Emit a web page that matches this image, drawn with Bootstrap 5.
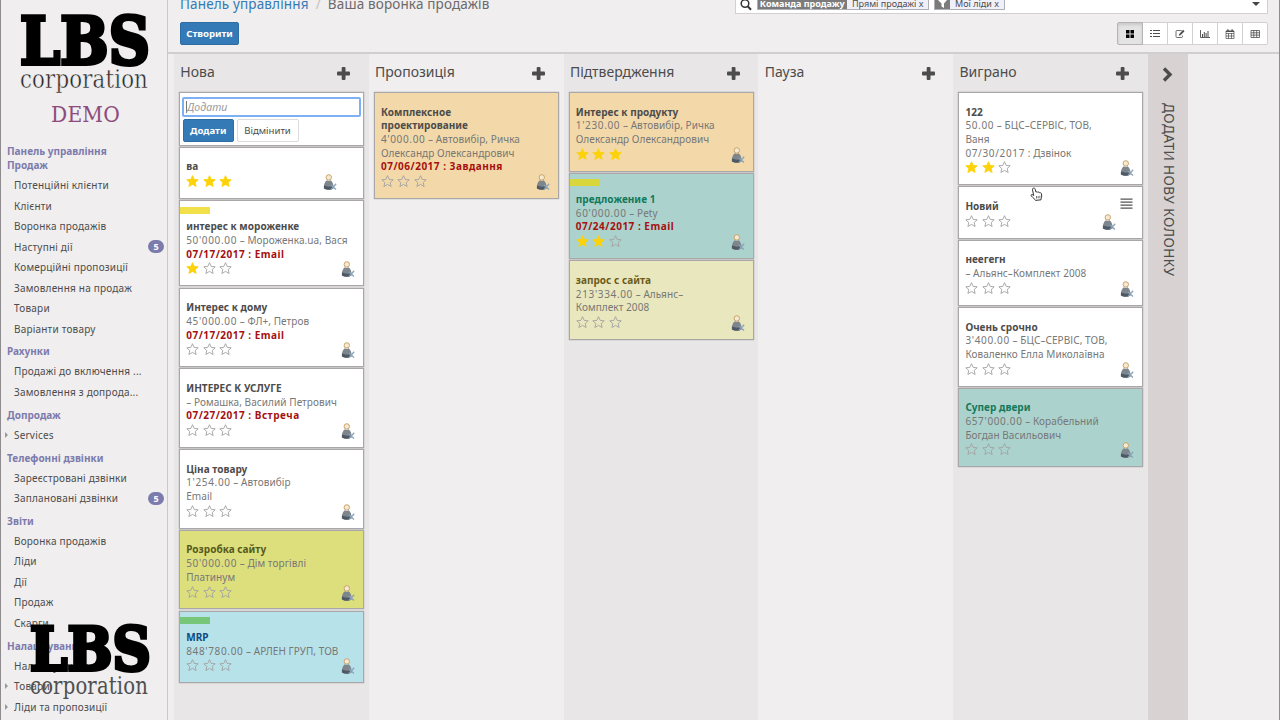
<!DOCTYPE html>
<html lang="uk">
<head>
  <meta charset="UTF-8">
  <meta name="viewport" content="width=device-width, initial-scale=1.0">
  <title>Ваша воронка продажів</title>
  <!-- Bootstrap CSS -->
  <link href="https://cdn.jsdelivr.net/npm/bootstrap@5.3.0/dist/css/bootstrap.min.css" rel="stylesheet">
  <!-- Custom CSS -->
  <style>
    body {
      font-family: "Noto Sans", "Open Sans", sans-serif;
      font-size: 10px;
      line-height: 13.7px;
      letter-spacing: 0.2px;
      color: #4c4c4c;
      background: #f0eeee;
      width: 1280px;
      height: 720px;
      overflow: hidden;
    }
    .app {
      height: 720px;
      border-left: 1px solid #8d8b8d;
      border-right: 1px solid #8d8b8d;
    }
    /* Sidebar */
    .sidebar {
      width: 167px;
      border-right: 1px solid #c9c7d0;
      overflow: hidden;
    }
    .brand-area {
      height: 145px;
    }
    .menu-title {
      color: #7c7bad;
      font-weight: 700;
      letter-spacing: 0;
      line-height: 19px;
      padding: 3.3px 0 0 6px;
      height: 22.3px;
    }
    .menu-title.tight {
      line-height: 13.7px;
      padding-top: 0;
      height: 13.7px;
    }
    .menu-title.tight-last {
      height: 16.5px;
    }
    .menu-item {
      height: 20.5px;
      line-height: 20.5px;
      padding: 0 3px 0 13px;
      white-space: nowrap;
    }
    .menu-item.has-sub {
      padding-left: 4px;
    }
    .menu-item.has-sub::before {
      content: "";
      border-left: 3px solid #999;
      border-top: 3px solid transparent;
      border-bottom: 3px solid transparent;
      margin-right: 6px;
    }
    .counter {
      background: #7c7bad;
      color: #fff;
      font-size: 9px;
      font-weight: 700;
      line-height: 13px;
      width: 16px;
      border-radius: 7px;
      text-align: center;
      letter-spacing: 0;
    }
    .watermark {
      position: absolute;
      left: 28px;
      top: 620px;
    }
    /* Control panel */
    .control-panel {
      height: 54px;
      border-bottom: 2px solid #d0cecf;
      padding: 0 11.5px 0 12px;
    }
    .crumbs {
      font-size: 13.5px;
      line-height: 18px;
      height: 27px;
      margin-top: -5px;
      letter-spacing: 0.15px;
      color: #6c6a6a;
      white-space: nowrap;
    }
    .crumbs a {
      color: #337ab7;
    }
    .crumb-slash {
      color: #c4c2c2;
      padding: 0 7px;
    }
    .search-box {
      width: 533px;
      height: 15px;
      margin: -1px 0 8px;
      background: #fff;
      border: 1px solid #d2d0d0;
      padding: 0 7px 0 4px;
    }
    .facet {
      height: 11px;
      margin-top: -1px;
      margin-right: 4.5px;
      line-height: 7px;
      border: 1px solid #afafb6;
      background: #f0f0fa;
      white-space: nowrap;
    }
    .facet-name {
      background: #7c7b7b;
      color: #fff;
      font-weight: 700;
      letter-spacing: 0;
    }
    .facet-name.named {
      width: 89.5px;
      text-align: center;
      font-size: 9px;
    }
    .facet-value {
      padding: 0 5px;
      letter-spacing: 0;
      font-size: 9px;
    }
    .btn-odoo {
      font-size: 9.6px;
      line-height: 20px;
      padding: 0;
      border-radius: 2px;
      height: 23px;
      letter-spacing: 0;
    }
    .btn-main {
      background: #337ab7;
      border-color: #2e6da4;
      color: #fff;
      font-weight: 700;
    }
    .btn-plain {
      background: #fff;
      border-color: #dcdcdc;
      color: #4c4c4c;
    }
    .btn-create {
      width: 59px;
    }
    .view-switch .btn {
      width: 26px;
      flex: none;
      border-color: #d2d2d2;
      background: #fff;
      color: #4c4c4c;
      display: flex;
      align-items: center;
      justify-content: center;
    }
    .view-switch .btn.active {
      background: #e4e4e4;
      border-color: #b5b5b5;
      box-shadow: inset 0 2px 3px rgba(0, 0, 0, 0.12);
      color: #000;
    }
    /* Kanban board */
    .board {
      padding-left: 6px;
    }
    .stage {
      width: 194.8px;
      padding: 0 5px;
    }
    .stage:nth-child(odd) {
      background: #e8e6e7;
    }
    .stage-head {
      height: 38px;
      padding: 0 13.5px 2px 1.3px;
      font-size: 14px;
      letter-spacing: 0;
    }
    .stage-head svg {
      margin-top: 2px;
    }
    .lead-card {
      width: 185px;
      border: 1px solid #a9a7a8;
      box-shadow: 0 0 1px rgba(0, 0, 0, 0.4);
      background: #fff;
      padding: 12.6px 8px 7.9px 6.2px;
      margin-bottom: 1.2px;
      color: #777;
      letter-spacing: 0.07px;
      white-space: nowrap;
    }
    .lead-card.tagged {
      padding-top: 5.6px;
    }
    .tag-bar {
      width: 30px;
      height: 7px;
      margin: 0 0 6.7px -6.2px;
    }
    .lead-name {
      font-weight: 700;
      letter-spacing: 0.03px;
      color: #4c4c4c;
    }
    .lead-late {
      font-weight: 700;
      letter-spacing: 0.5px;
      color: #a51010;
    }
    .amount {
      letter-spacing: 0.65px;
    }
    .lead-foot {
      height: 16px;
    }
    .stars {
      gap: 3.4px;
      padding-top: 1px;
    }
    .stars svg,
    .avatar {
      flex: none;
    }
    .lead-burger {
      height: 13.7px;
      margin-top: -2px;
      margin-right: 1px;
    }
    .has-menu .lead-foot {
      margin-right: 18px;
    }
    .quick-card {
      height: 53.5px;
      padding: 4px 2px 0;
    }
    .quick-input {
      height: 20px;
      border: 2px solid #7db1f3;
      border-radius: 2px;
      padding: 0 2px;
      font-style: italic;
      font-size: 10.5px;
      color: #999;
      line-height: 16px;
    }
    .quick-input::before {
      content: "";
      display: inline-block;
      height: 12px;
      border-left: 1px solid #777;
      vertical-align: -2px;
    }
    .quick-buttons {
      gap: 3px;
      padding: 2px 0 0 1px;
    }
    .quick-buttons .btn-main {
      width: 50.5px;
    }
    .quick-buttons .btn-plain {
      width: 62px;
    }
    .c-orange { background: #f3d9a9; }
    .c-teal { background: #acd2cd; }
    .c-teal .lead-name { color: #12795a; }
    .c-sand { background: #e9e7bd; }
    .c-sand .lead-name { color: #6b5c1b; }
    .c-lime { background: #dddf7d; }
    .c-lime .lead-name { color: #56591c; }
    .c-blue { background: #b8e2e9; }
    .c-blue .lead-name { color: #0c4a80; }
    .add-stage {
      width: 40px;
      background: #d8d2d2;
    }
    .add-stage-label {
      writing-mode: vertical-rl;
      font-size: 13.6px;
      line-height: 16px;
      letter-spacing: 0.42px;
      margin-top: 11px;
      margin-left: 2px;
      white-space: nowrap;
    }
    .pointer {
      position: absolute;
      left: 1030px;
      top: 187px;
    }
  </style>
</head>
<body>
  <div class="app d-flex">
    <!-- Sidebar -->
    <aside class="sidebar flex-shrink-0">
      <div class="brand-area">
        <svg width="166" height="145">
          <g font-family="DejaVu Serif">
            <text x="19" y="64" font-size="66" font-weight="700" fill="#000" stroke="#000" stroke-width="4" textLength="130" lengthAdjust="spacingAndGlyphs">LBS</text>
            <text x="19" y="88" font-size="26" fill="#222" stroke="#f0eeee" stroke-width=".5" textLength="128" lengthAdjust="spacingAndGlyphs">corporation</text>
            <text x="50" y="122" font-size="21.500" fill="#8e4c7c" textLength="69" lengthAdjust="spacingAndGlyphs">DEMO</text>
          </g>
        </svg>
      </div>
      <div id="menu"></div>
    </aside>

    <main class="flex-grow-1 d-flex flex-column">
      <!-- Control panel -->
      <div class="control-panel d-flex justify-content-between flex-shrink-0">
        <div>
          <div class="crumbs d-flex"><a href="#" class="text-decoration-none">Панель управління</a><span class="crumb-slash">/</span><span>Ваша воронка продажів</span></div>
          <button class="btn btn-odoo btn-main btn-create">Створити</button>
        </div>
        <div class="d-flex flex-column align-items-end">
          <div class="search-box d-flex align-items-start">
            <svg width="17" height="13" class="flex-shrink-0" fill="none" stroke="#333" stroke-width="1.500"><circle cx="5" cy="3.500" r="3.800"/><path d="M7.800 6.400 11 9.800" stroke-width="2"/></svg>
            <div class="facet d-flex"><span class="facet-name named">Команда продажу</span><span class="facet-value">Прямі продажі x</span></div>
            <div class="facet d-flex"><span class="facet-name"><svg class="d-block" width="15" height="9" fill="#fff"><path d="M3 0h9L9 3.500V8L6.500 6.500V3.500z"/></svg></span><span class="facet-value">Мої ліди x</span></div>
            <svg width="8" height="12" class="ms-auto" fill="#444"><path d="M0 2h8L4 6z"/></svg>
          </div>
          <div class="btn-group view-switch" id="views"></div>
        </div>
      </div>

      <!-- Board -->
      <div class="board d-flex flex-grow-1" id="board"></div>
    </main>
  </div>

  <svg class="watermark" width="126" height="80">
    <g font-family="DejaVu Serif">
      <text x="2" y="50" font-size="60" font-weight="700" fill="#000" stroke="#000" stroke-width="4" textLength="121" lengthAdjust="spacingAndGlyphs">LBS</text>
      <text x="2" y="74" font-size="24.500" fill="#505050" textLength="118" lengthAdjust="spacingAndGlyphs">corporation</text>
    </g>
  </svg>
  <svg class="pointer" width="14" height="16" fill="#fff" stroke="#333" stroke-width="1" stroke-linejoin="round">
    <path d="M3.200 1.200c1-.5 1.800.3 2 1l.8 3c.6-.7 1.500-.5 1.800.1.600-.5 1.600-.3 1.900.5.800-.3 1.600.1 1.800 1l.2 2.200c.1 1.400-.6 2-.7 3.800l-5.500.600C5 12 3.200 11.300 1.300 8.900c-.7-.9.300-1.800 1.200-1.200l1.200.9L2.500 2.800c-.2-.7.100-1.300.7-1.600z"/>
    <path d="M6.500 9v2.500M8.200 9v2.400M9.900 8.800v2.400" stroke-width=".7"/>
  </svg>

  <!-- Bootstrap JS -->
  <script src="https://cdn.jsdelivr.net/npm/bootstrap@5.3.0/dist/js/bootstrap.bundle.min.js"></script>
  <script>
    const menu = [
      { title: 'Панель управління', cls: 'tight', items: [] },
      { title: 'Продаж', cls: 'tight tight-last', items: ['Потенційні клієнти', 'Клієнти', 'Воронка продажів', 'Наступні дії|5', 'Комерційні пропозиції', 'Замовлення на продаж', 'Товари', 'Варіанти товару'] },
      { title: 'Рахунки', items: ['Продажі до включення ...', 'Замовлення з допрода...'] },
      { title: 'Допродаж', items: ['>Services'] },
      { title: 'Телефонні дзвінки', items: ['Зареєстровані дзвінки', 'Заплановані дзвінки|5'] },
      { title: 'Звіти', items: ['Воронка продажів', 'Ліди', 'Дії', 'Продаж', 'Скарги'] },
      { title: 'Налаштування', items: ['Налаштування', '>Товари', '>Ліди та пропозиції'] }
    ];

    const stages = [
      { name: 'Нова', quick: true, leads: [
        { name: 'ва', stars: 3, menu: 'hidden' },
        { name: 'интерес к мороженке', lines: ["50'000.00 – Мороженка.ua, Вася"], late: '07/17/2017 : Email', stars: 1, tag: '#f2e04a' },
        { name: 'Интерес к дому', lines: ["45'000.00 – ФЛ+, Петров"], late: '07/17/2017 : Email' },
        { name: 'ИНТЕРЕС К УСЛУГЕ', lines: ['– Ромашка, Василий Петрович'], late: '07/27/2017 : Встреча' },
        { name: 'Ціна товару', lines: ["1'254.00 – Автовибір", 'Email'] },
        { name: 'Розробка сайту', lines: ["50'000.00 – Дім торгівлі", 'Платинум'], color: 'c-lime' },
        { name: 'MRP', lines: ["848'780.00 – АРЛЕН ГРУП, ТОВ"], color: 'c-blue', tag: '#78c679' }
      ] },
      { name: 'Пропозиція', leads: [
        { name: 'Комплексное<br>проектирование', lines: ["4'000.00 – Автовибір, Ричка", 'Олександр Олександрович'], late: '07/06/2017 : Завдання', color: 'c-orange' }
      ] },
      { name: 'Підтвердження', leads: [
        { name: 'Интерес к продукту', lines: ["1'230.00 – Автовибір, Ричка", 'Олександр Олександрович'], stars: 3, color: 'c-orange' },
        { name: 'предложение 1', lines: ["60'000.00 – Pety"], late: '07/24/2017 : Email', stars: 2, color: 'c-teal', tag: '#d9d63c' },
        { name: 'запрос с сайта', lines: ["213'334.00 – Альянс–", 'Комплект 2008'], color: 'c-sand' }
      ] },
      { name: 'Пауза', leads: [] },
      { name: 'Виграно', leads: [
        { name: '122', lines: ['50.00 – БЦС–СЕРВІС, ТОВ,', 'Ваня', '07/30/2017 : Дзвінок'], stars: 2 },
        { name: 'Новий', menu: 'shown' },
        { name: 'неегегн', lines: ['– Альянс–Комплект 2008'] },
        { name: 'Очень срочно', lines: ["3'400.00 – БЦС–СЕРВІС, ТОВ,", 'Коваленко Елла Миколаївна'] },
        { name: 'Супер двери', lines: ["657'000.00 – Корабельний", 'Богдан Васильович'], color: 'c-teal' }
      ] }
    ];

    const viewIcons = [
      '<path d="M2 2h3.500v3.500H2zM6.500 2H10v3.500H6.500zM2 6.500h3.500V10H2zM6.500 6.500H10V10H6.500z"/>',
      '<path d="M1 2h2v1H1zM4 2h7v1H4zM1 5h2v1H1zM4 5h7v1H4zM1 8h2v1H1zM4 8h7v1H4z"/>',
      '<path d="M7.500 2.500H3q-1 0-1 1v5q0 1 1 1h4.500q1 0 1-1V7.500" fill="none" stroke="currentColor" stroke-width=".8"/><path d="M9 1.800l1.500 1.400L6.500 7.200 4.800 7.800 5.300 5.900z"/>',
      '<path d="M1.500 2v7.500h9.500" fill="none" stroke="currentColor" stroke-width=".9"/><path d="M3 6h1v3H3zM4.800 4h1v5h-1zM6.600 5h1v4h-1zM8.500 3h1v6h-1z"/>',
      '<path d="M2 3h8v7.500H2zM2 5.500h8M4.500 5v5.500M7.500 5v5.500M2 8h8" fill="none" stroke="currentColor" stroke-width=".7"/><path d="M3.300 1.300h1.200v2.500H3.300zM7.500 1.300h1.200v2.500H7.500zM2 2.800h8V4H2z"/>',
      '<path d="M2 2.500h8.500v7H2zM2 4.800h8.500M2 7.100h8.500M4.800 2.500v7M7.700 2.500v7" fill="none" stroke="currentColor" stroke-width=".8"/>'
    ];

    const plusIcon = '<svg width="13" height="13" fill="#4c4c4c"><rect x="4.700" y="0" width="3.800" height="13" rx="1"/><rect x="0" y="4.600" width="13" height="3.800" rx="1"/></svg>';
    const avatar = `<svg class="avatar" width="14" height="17">
      <circle cx="5.800" cy="3.400" r="2.700" fill="#f6ead2" stroke="#c9a26c"/>
      <path d="M3.800 6.200Q5.800 7.800 7.600 6.200Q11 9 10.500 14.500Q5.500 17 .8 14.500Q.5 9 3.800 6.200z" fill="#7d868d"/>
      <path d="M1 11.500q4.500 2 9.300.5v2.500q-4.800 2.500-9.300 0z" fill="#4e5964"/>
      <path d="M8 11l5 4.500M13.200 9.800l-5 5.500" stroke="#8aa3ba" stroke-width="1.300"/></svg>`;
    const burger = '<svg class="d-block" width="13" height="12" fill="#555"><path d="M.5.500h12v1.300H.5zM.5 3.500h12v1.300H.5zM.5 6.500h12v1.300H.5zM.5 9.500h12v1.300H.5z"/></svg>';

    function star(full) {
      const paint = full ? 'fill="#fdd20a" stroke="#fdd20a"' : 'fill="none" stroke="#a2a2a2"';
      return `<svg width="13" height="13" ${paint} stroke-width=".9" stroke-linejoin="round"><path d="M6.500.7l1.700 3.700 4 .4-3 2.700.9 4-3.600-2.100-3.600 2.100.9-4-3-2.700 4-.4z"/></svg>`;
    }

    // Sums and dates at the start of a line are set a little wider
    function renderLine(line) {
      return `<div>${line.replace(/^[\d'.\/]+/, '<span class="amount">$&</span>')}</div>`;
    }

    function renderLead(lead) {
      const lines = (lead.lines || []).map(renderLine).join('');
      const stars = [1, 2, 3].map(n => star(n <= (lead.stars || 0))).join('');
      return `
        <div class="lead-card ${lead.color || ''} ${lead.tag ? 'tagged' : ''} ${lead.menu ? 'has-menu' : ''}">
          ${lead.tag ? `<div class="tag-bar" style="background:${lead.tag}"></div>` : ''}
          <div class="d-flex justify-content-between">
            <div class="lead-name">${lead.name}</div>
            ${lead.menu === 'shown' ? `<div class="lead-burger">${burger}</div>` : ''}
          </div>
          ${lines}
          ${lead.late ? `<div class="lead-late">${lead.late}</div>` : ''}
          <div class="lead-foot d-flex justify-content-between">
            <div class="stars d-flex">${stars}</div>
            ${avatar}
          </div>
        </div>`;
    }

    const quickCard = `
      <div class="lead-card quick-card">
        <div class="quick-input">Додати</div>
        <div class="d-flex quick-buttons"><button class="btn btn-odoo btn-main">Додати</button><button class="btn btn-odoo btn-plain">Відмінити</button></div>
      </div>`;

    document.getElementById('menu').innerHTML = menu.map(section => `
      <div class="menu-title ${section.cls || ''}">${section.title}</div>
      ${section.items.map(item => {
        const [label, count] = item.split('|');
        const sub = label.startsWith('>');
        return `<div class="menu-item d-flex align-items-center ${sub ? 'has-sub' : ''}">
          <span>${label.replace('>', '')}</span>${count ? `<span class="counter ms-auto">${count}</span>` : ''}
        </div>`;
      }).join('')}`).join('');

    document.getElementById('views').innerHTML = viewIcons.map((icon, i) =>
      `<button class="btn btn-odoo ${i === 0 ? 'active' : ''}"><svg width="12" height="12" fill="currentColor">${icon}</svg></button>`).join('');

    document.getElementById('board').innerHTML = stages.map(stage => `
      <section class="stage flex-shrink-0">
        <div class="stage-head d-flex justify-content-between align-items-center"><span>${stage.name}</span>${plusIcon}</div>
        ${stage.quick ? quickCard : ''}
        ${stage.leads.map(renderLead).join('')}
      </section>`).join('') + `
      <div class="add-stage d-flex flex-column align-items-center flex-shrink-0">
        <div class="stage-head d-flex align-items-center p-0"><svg width="12" height="15" fill="none" stroke="#4c4c4c" stroke-width="3.400"><path d="M2 1.500l6 6-6 6"/></svg></div>
        <div class="add-stage-label">ДОДАТИ НОВУ КОЛОНКУ</div>
      </div>`;
  </script>
</body>
</html>
